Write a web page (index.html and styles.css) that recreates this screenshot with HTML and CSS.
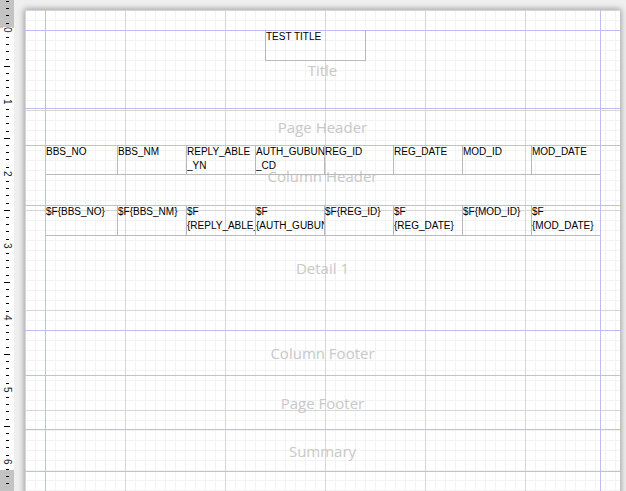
FILE: index.html
```html
<!DOCTYPE html>
<html lang="en">
<head>
<meta charset="utf-8">
<title>Report Designer</title>
<link rel="stylesheet" href="styles.css">
</head>
<body>
<div class="app">
  <div class="ruler">
    <div class="num"><span>0</span></div>
    <div class="num"><span>1</span></div>
    <div class="num"><span>2</span></div>
    <div class="num"><span>3</span></div>
    <div class="num"><span>4</span></div>
    <div class="num"><span>5</span></div>
    <div class="num"><span>6</span></div>
  </div>
  <div class="workspace">
    <div class="page">
      <div class="bands">
        <section class="band band-title">
          <span class="band-label">Title</span>
          <div class="title-box">TEST TITLE</div>
        </section>
        <section class="band band-pheader">
          <span class="band-label">Page Header</span>
        </section>
        <section class="band band-cheader">
          <span class="band-label">Column Header</span>
          <div class="row">
            <div class="cell first">BBS_NO</div>
            <div class="cell">BBS_NM</div>
            <div class="cell">REPLY_ABLE<br>_YN</div>
            <div class="cell">AUTH_GUBUN<br>_CD</div>
            <div class="cell">REG_ID</div>
            <div class="cell">REG_DATE</div>
            <div class="cell">MOD_ID</div>
            <div class="cell last">MOD_DATE</div>
          </div>
        </section>
        <section class="band band-detail">
          <span class="band-label">Detail 1</span>
          <div class="row row-detail">
            <div class="cell first">$F{BBS_NO}</div>
            <div class="cell">$F{BBS_NM}</div>
            <div class="cell">$F<br>{REPLY_ABLE_YN}</div>
            <div class="cell">$F<br>{AUTH_GUBUN_CD}</div>
            <div class="cell">$F{REG_ID}</div>
            <div class="cell">$F<br>{REG_DATE}</div>
            <div class="cell">$F{MOD_ID}</div>
            <div class="cell last">$F<br>{MOD_DATE}</div>
          </div>
        </section>
        <section class="band band-cfooter">
          <span class="band-label">Column Footer</span>
        </section>
        <section class="band band-pfooter">
          <span class="band-label">Page Footer</span>
        </section>
        <section class="band band-summary">
          <span class="band-label">Summary</span>
        </section>
      </div>
    </div>
  </div>
</div>
</body>
</html>
```
FILE: styles.css
```css
* { box-sizing: border-box; }
html, body { margin: 0; height: 100%; overflow: hidden; }
body {
  font-family: "Liberation Sans", Arial, sans-serif;
  background: #efefef;
  color: #000;
}
.app { display: flex; height: 491px; }

/* vertical ruler */
.ruler {
  width: 14px;
  flex: none;
  display: flex;
  flex-direction: column;
  align-items: center;
  padding-top: 27px;
  background:
    repeating-linear-gradient(#000 0 1px, transparent 1px 7.2px) 6px 1.2px / 3px 100% no-repeat,
    repeating-linear-gradient(#000 0 1px, transparent 1px 72px) 4px 66px / 6px 100% no-repeat,
    linear-gradient(#c3c3c3, #c3c3c3) 0 0 / 100% 28px no-repeat,
    linear-gradient(#c3c3c3, #c3c3c3) 0 470px / 100% 100% no-repeat,
    #fff;
}
.num { height: 72px; flex: none; }
.num span {
  display: block;
  writing-mode: vertical-rl;
  width: 9px;
  height: 7px;
  background: #fff;
  font-size: 10px;
  line-height: 9px;
  color: #1a1a1a;
}

/* workspace & page */
.workspace {
  flex: 1;
  padding: 10px 0 0 11px;
  overflow: hidden;
  background: #efefef;
}
.page {
  width: 595px;
  height: 600px;
  box-shadow: 0 0 6px 1px rgba(0, 0, 0, 0.35);
  background:
    linear-gradient(#bdbdf5, #bdbdf5) 20px 0 / 1px 100% no-repeat,
    linear-gradient(#bdbdf5, #bdbdf5) 575px 0 / 1px 100% no-repeat,
    linear-gradient(#bdbdf5, #bdbdf5) 0 20px / 100% 1px no-repeat,
    linear-gradient(90deg, #d6d6d6 1px, transparent 1px) 0 0 / 100px 100px,
    linear-gradient(#d6d6d6 1px, transparent 1px) 0 0 / 100px 100px,
    linear-gradient(90deg, #f3f3f3 1px, transparent 1px) 0 0 / 10px 10px,
    linear-gradient(#f3f3f3 1px, transparent 1px) 0 0 / 10px 10px,
    #fff;
}
.bands { padding-top: 21px; display: flex; flex-direction: column; }
.band {
  position: relative;
  flex: none;
  border-bottom: 1px solid #bdbdf5;
}
.band-title { height: 78px; }
.band-pheader { height: 37px; }
.band-cheader { height: 60px; }
.band-detail { height: 125px; }
.band-cfooter { height: 45px; }
.band-pfooter { height: 54px; }
.band-summary { height: 42px; }

.band-label {
  position: absolute;
  inset: 0;
  z-index: 0;
  display: flex;
  align-items: center;
  justify-content: center;
  font-family: "Open Sans", "Noto Sans", sans-serif;
  font-size: 15px;
  color: #c8c8c8;
}

.title-box {
  position: relative;
  z-index: 1;
  margin: -1px 0 0 240px;
  width: 101px;
  height: 31px;
  border: 1px solid #b9b9b9;
  border-top-color: transparent;
  font-size: 10px;
  line-height: 11px;
  white-space: nowrap;
  overflow: hidden;
}

.row {
  position: relative;
  z-index: 1;
  display: flex;
  margin: -1px 0 0 21px;
  height: 30px;
}
.row-detail { height: 31px; }
.cell {
  flex: none;
  width: 69px;
  height: 100%;
  border-right: 1px solid #b9b9b9;
  border-bottom: 1px solid #b9b9b9;
  font-size: 10px;
  line-height: 13.5px;
  white-space: nowrap;
  overflow: hidden;
}
.cell.first { width: 72px; }
.cell.last { border-right-color: transparent; }
```
